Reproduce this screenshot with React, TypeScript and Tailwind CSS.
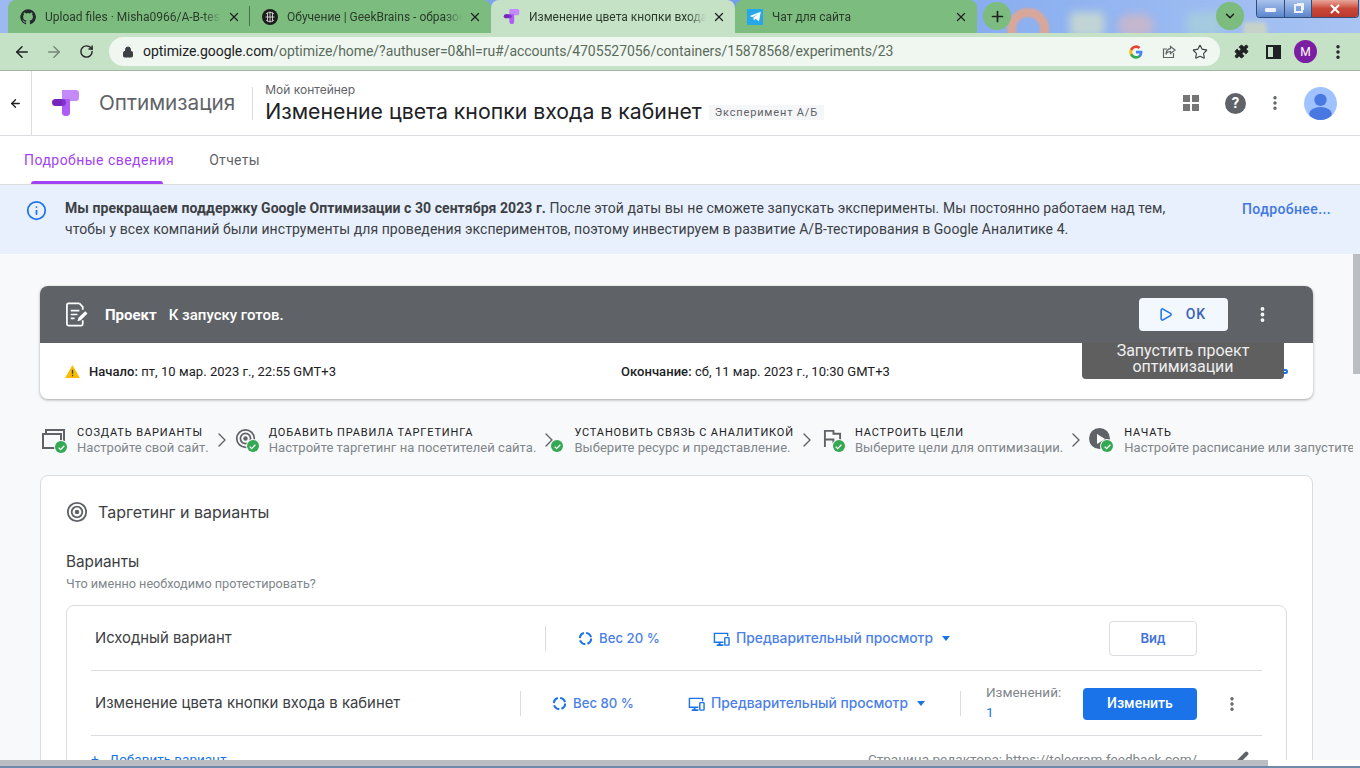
import React from "react";
import { ArrowLeft, ArrowRight, RotateCw, Lock, Star, X, Plus, ChevronDown, ChevronRight, MoreVertical, Puzzle, Info, Play, Pencil } from "lucide-react";

const roboto = "font-['Roboto',sans-serif]";
const display = "font-['Inter',sans-serif]";

function Check({ className }: { className: string }) {
  return (
    <span className={`absolute flex h-[12px] w-[12px] items-center justify-center rounded-full bg-[#34a853] ring-1 ring-[#f8f9fa] ${className}`}>
      <svg viewBox="0 0 12 12" className="h-[9px] w-[9px]" fill="none" stroke="#fff" strokeWidth="1.7">
        <path d="M2.2 6.2 4.8 8.8 9.8 3.6" />
      </svg>
    </span>
  );
}

function Tab({ icon, title, active, w, sep }: { icon: React.ReactNode; title: string; active?: boolean; w: string; sep?: boolean }) {
  return (
    <div className={`relative flex h-[33px] shrink-0 items-center pl-[12px] pr-[9px] ${w} ${active ? "bg-[#c6e2c6] rounded-t-lg" : ""}`}>
      {icon}
      <span className="ml-[9px] min-w-0 flex-1 overflow-hidden whitespace-nowrap text-[12px] text-[#2b3b2c] [mask-image:linear-gradient(to_right,black_90%,transparent)]">{title}</span>
      <X className="ml-[6px] h-[14px] w-[14px] shrink-0 text-[#202124]" strokeWidth={2.2} />
      {sep && <span className="absolute right-0 top-[6px] h-[20px] w-px bg-[#4d6f4e]" />}
    </div>
  );
}

function OptimizeLogo({ className }: { className: string }) {
  return (
    <svg viewBox="0 0 27 26" className={className}>
      <path d="M10 0h14a3 3 0 0 1 3 3v5a3 3 0 0 1-3 3h-14z" fill="#c58af9" />
      <path d="M10 5a5 5 0 0 1 5-5h3v22a4 4 0 0 1-8 0z" fill="#c58af9" />
      <path d="M10 9h8v13a4 4 0 0 1-8 0z" fill="#af5cf7" />
      <circle cx="3.500" cy="12.500" r="3.500" fill="#7627bb" />
      <path d="M3.500 9h7v7h-7z" fill="#7627bb" />
      <path d="M10 9h.5a3.500 3.500 0 0 1 0 7H10z" fill="#8430ce" />
    </svg>
  );
}

function TargetIcon({ className, color = "#5f6368" }: { className: string; color?: string }) {
  return (
    <svg viewBox="0 0 24 24" className={className} fill="none" stroke={color}>
      <circle cx="12" cy="12" r="10" strokeWidth="2" />
      <circle cx="12" cy="12" r="5.800" strokeWidth="2" />
      <circle cx="12" cy="12" r="2.500" fill={color} stroke="none" />
    </svg>
  );
}

function Step({ icon, title, sub, iconW, last }: { icon: React.ReactNode; title: string; sub: string; iconW: string; last?: boolean }) {
  return (
    <div className="flex shrink-0 items-center">
      <div className={`relative h-[26px] shrink-0 ${iconW}`}>{icon}</div>
      <div className={`${roboto} whitespace-nowrap`}>
        <div className="text-[11px] leading-[15px] tracking-[0.85px] text-[#202124]">{title}</div>
        <div className="text-[13px] leading-[16px] tracking-[0.04px] text-[#80868b]">{sub}</div>
      </div>
      {!last && <ChevronRight className="mx-[1px] h-[24px] w-[24px] shrink-0 text-[#5f6368]" strokeWidth={1.4} />}
    </div>
  );
}

function WeightIcon() {
  return (
    <svg viewBox="0 0 16 16" className="h-[15px] w-[15px]" fill="none" stroke="#1a73e8" strokeWidth="2.200">
      <circle cx="8" cy="8" r="6" strokeDasharray="7 2.420" />
    </svg>
  );
}

function DevicesIcon() {
  return (
    <svg viewBox="0 0 18 16" className="h-[16px] w-[17px]" fill="none" stroke="#1a73e8" strokeWidth="1.500">
      <path d="M11 11.500H1.500V2h14v3" />
      <path d="M4 14.500h7M7 11.500v3" strokeWidth="2" />
      <rect x="12.500" y="6.500" width="4.500" height="8" rx=".8" />
    </svg>
  );
}

function Preview() {
  return (
    <div className="flex items-center">
      <DevicesIcon />
      <span className={`${display} ml-[6px] whitespace-nowrap text-[13.8px] font-medium text-[#4b7fe8]`}>Предварительный просмотр</span>
      <span className="ml-[9px] h-0 w-0 border-x-[4.500px] border-t-[5px] border-x-transparent border-t-[#1a73e8]" />
    </div>
  );
}

export default function App(): React.ReactElement {
  return (
    <div className={`${roboto} flex h-[768px] w-[1360px] flex-col overflow-hidden bg-white`}>
      {/* browser tab strip */}
      <div className="relative flex h-[33px] shrink-0 overflow-hidden bg-gradient-to-r from-[#9db9f2] via-[#6f9bec] to-[#a9c4f3]">
        <div className="absolute left-[1007px] top-[8px] h-[42px] w-[42px] rounded-full border-[9px] border-[#d9a79a] blur-[1px]" />
        <div className="absolute left-[1070px] top-[12px] h-[24px] w-[34px] rounded-sm bg-[#d8e4c8] opacity-70 blur-[4px]" />
        <div className="absolute left-[1118px] top-[14px] h-[24px] w-[36px] rounded-full bg-[#d8b7c0] opacity-70 blur-[4px]" />
        <div className="absolute left-[1186px] top-[12px] h-[24px] w-[36px] rounded-lg bg-[#a8d2d8] opacity-70 blur-[4px]" />
        <div className="absolute left-[1243px] top-[22px] h-[14px] w-[24px] rounded-sm bg-[#d8dcb8] opacity-70 blur-[2px]" />
        <div className="relative ml-[8px] flex h-[33px] w-[483px] shrink-0 rounded-t-lg bg-[#7cbc7e]">
          <Tab
            w="w-[242px]"
            sep
            title="Upload files · Misha0966/A-B-test"
            icon={
              <svg viewBox="0 0 24 24" className="h-[16px] w-[16px] shrink-0" fill="#24292f">
                <path d="M12 .5a11.500 11.500 0 0 0-3.640 22.410c.58.110.790-.250.790-.550v-2.030c-3.200.700-3.880-1.360-3.880-1.360-.520-1.330-1.280-1.690-1.280-1.690-1.040-.710.080-.700.080-.700 1.160.080 1.770 1.190 1.770 1.190 1.030 1.760 2.700 1.250 3.350.960.100-.750.400-1.250.730-1.540-2.550-.290-5.240-1.280-5.240-5.680 0-1.250.450-2.280 1.180-3.080-.120-.290-.510-1.460.110-3.040 0 0 .970-.310 3.170 1.180a11 11 0 0 1 5.770 0c2.200-1.490 3.170-1.180 3.170-1.180.620 1.580.230 2.750.110 3.040.740.800 1.180 1.830 1.180 3.080 0 4.410-2.690 5.380-5.250 5.670.410.360.780 1.050.780 2.120v3.140c0 .310.210.670.800.550A11.500 11.500 0 0 0 12 .5z" />
              </svg>
            }
          />
          <Tab
            w="w-[241px]"
            title="Обучение | GeekBrains - образовательный портал"
            icon={
              <svg viewBox="0 0 16 16" className="h-[16px] w-[16px] shrink-0">
                <circle cx="8" cy="8" r="8" fill="#1d1d1f" />
                <path d="M4 5c2-2 6-2 8 0M3.500 8h9M4 11c2 2 6 2 8 0M8 2.500v11M5.500 3.500v9M10.500 3.500v9" stroke="#e8e8e8" strokeWidth=".8" fill="none" />
              </svg>
            }
          />
        </div>
        <div className="relative w-[244px] shrink-0">
          <Tab w="w-[244px]" active title="Изменение цвета кнопки входа в кабинет" icon={<OptimizeLogo className="h-[15px] w-[17px] shrink-0" />} />
        </div>
        <div className="relative w-[242px] shrink-0">
          <div className="h-[33px] rounded-t-lg bg-[#7cbc7e]">
            <Tab
              w="w-[242px]"
              title="Чат для сайта"
              icon={
                <span className="flex h-[16px] w-[16px] shrink-0 items-center justify-center bg-[#27a7e7]">
                  <svg viewBox="0 0 16 16" className="h-[13px] w-[13px]" fill="#fff">
                    <path d="M1 7.500 14.500 2 12.300 14 8 10.800l-2 2-.6-3.600L11.500 4.700 4 8.800z" />
                  </svg>
                </span>
              }
            />
          </div>
        </div>
        <div className="relative ml-[6px] mt-[2px] flex h-[28px] w-[28px] items-center justify-center rounded-full bg-[#7cbc7e]">
          <Plus className="h-[17px] w-[17px] text-[#202124]" strokeWidth={2.4} />
        </div>
        <div className="relative ml-[205px] mt-[2px] flex h-[28px] w-[28px] items-center justify-center rounded-full bg-[#7cbc7e]">
          <ChevronDown className="h-[14px] w-[14px] text-[#202124]" strokeWidth={2.6} />
        </div>
        {/* window buttons */}
        <div className="absolute right-[1px] top-0 flex h-[18px] w-[103px] overflow-hidden rounded-b-[4px] border border-t-0 border-[#2f4f7a]">
          <div className="flex w-[28px] items-center justify-center border-r border-[#2f4f7a] bg-gradient-to-b from-[#a9c3ec] to-[#5b86cc]">
            <span className="mt-[2px] h-[4px] w-[11px] rounded-[1px] bg-[#eef2f8]" />
          </div>
          <div className="flex w-[27px] items-center justify-center border-r border-[#2f4f7a] bg-gradient-to-b from-[#a9c3ec] to-[#5b86cc]">
            <span className="relative h-[9px] w-[9px] border-2 border-[#eef2f8] shadow-[2px_-2px_0_-1px_#eef2f8]" />
          </div>
          <div className="flex flex-1 items-center justify-center bg-gradient-to-b from-[#e8a79c] via-[#c9483a] to-[#b9392c]">
            <X className="h-[14px] w-[14px] text-white" strokeWidth={3.4} />
          </div>
        </div>
      </div>

      {/* browser toolbar */}
      <div className="flex h-[37px] shrink-0 items-center bg-[#c6e2c6]">
        <ArrowLeft className="ml-[13px] h-[18px] w-[18px] text-[#202124]" strokeWidth={2} />
        <ArrowRight className="ml-[14px] h-[18px] w-[18px] text-[#75877a]" strokeWidth={2} />
        <RotateCw className="ml-[16px] h-[15px] w-[15px] text-[#202124]" strokeWidth={2.2} />
        <div className="ml-[15px] flex h-[29px] w-[1111px] items-center rounded-full bg-[#f0f7f0] pl-[13px] pr-[12px]">
          <Lock className="h-[12px] w-[12px] text-[#3c4043]" fill="#3c4043" strokeWidth={2} />
          <span className="ml-[9px] whitespace-nowrap text-[14px] tracking-[-0.05px] text-[#5a6b5c]">
            <span className="text-[#202124]">optimize.google.com</span>/optimize/home/?authuser=0&amp;hl=ru#/accounts/4705527056/containers/15878568/experiments/23
          </span>
          <div className="ml-auto flex items-center">
            <svg viewBox="0 0 24 24" className="h-[14px] w-[14px]">
              <path d="M23 12.300c0-.800-.100-1.600-.200-2.300H12v4.400h6.200a5.300 5.300 0 0 1-2.300 3.400v2.900h3.700c2.200-2 3.400-5 3.400-8.400z" fill="#4285f4" />
              <path d="M12 23.500c3.100 0 5.700-1 7.600-2.800l-3.700-2.900c-1 .700-2.300 1.100-3.900 1.100-3 0-5.500-2-6.400-4.700H1.800v3A11.500 11.500 0 0 0 12 23.500z" fill="#34a853" />
              <path d="M5.600 14.200a7 7 0 0 1 0-4.400v-3H1.800a11.500 11.500 0 0 0 0 10.400z" fill="#fbbc05" />
              <path d="M12 5c1.700 0 3.200.6 4.400 1.700l3.300-3.300A11.500 11.500 0 0 0 1.800 6.800l3.800 3C6.500 7 9 5 12 5z" fill="#ea4335" />
            </svg>
            <svg viewBox="0 0 16 16" className="ml-[18px] h-[16px] w-[16px]" fill="none" stroke="#5f6368" strokeWidth="1.200">
              <path d="M12.500 9v4.500h-10V5H6" />
              <path d="M9.500 2.500 14 6l-4.500 3.500V7.500C7 7.500 5.500 8.500 5 10.500c0-3.500 1.800-5.500 4.500-5.800z" />
            </svg>
            <Star className="ml-[15px] h-[16px] w-[16px] text-[#3c4043]" strokeWidth={1.7} />
          </div>
        </div>
        <Puzzle className="ml-[14px] h-[15px] w-[15px] text-[#202124]" fill="#202124" strokeWidth={1.5} />
        <span className="ml-[17px] flex h-[14px] w-[15px] justify-end border-2 border-[#202124]">
          <span className="h-full w-[6px] bg-[#202124]" />
        </span>
        <span className="ml-[13px] flex h-[23px] w-[23px] items-center justify-center rounded-full bg-[#7b1fa2] text-[12px] text-white">M</span>
        <MoreVertical className="ml-[12px] h-[18px] w-[18px] text-[#202124]" strokeWidth={2.6} />
      </div>

      {/* app */}
      <div className="relative flex min-h-0 flex-1 flex-col border-t border-[#9fb7a0] bg-[#f8f9fa]">
        <header className="flex h-[65px] shrink-0 items-center border-b border-[#dadce0] bg-white">
          <div className="flex h-full w-[32px] shrink-0 items-center justify-center border-r border-[#dadce0]">
            <ArrowLeft className="h-[13px] w-[13px] text-[#202124]" strokeWidth={2.4} />
          </div>
          <OptimizeLogo className="ml-[20px] h-[26px] w-[27px] shrink-0" />
          <span className={`${display} ml-[20px] text-[20.700px] text-[#5f6368]`}>Оптимизация</span>
          <div className="ml-[17px] h-[33px] w-px bg-[#dadce0]" />
          <div className="ml-[12px] pt-[3px]">
            <div className={`${display} text-[12px] leading-[14px] text-[#5f6368]`}>Мой контейнер</div>
            <div className="flex items-center">
              <span className={`${display} text-[21.250px] leading-[29px] text-[#202124]`}>Изменение цвета кнопки входа в кабинет</span>
              <span className="ml-[7px] mt-[2px] bg-[#f5f6f7] px-[6px] text-[11px] leading-[15px] tracking-[0.83px] text-[#5f6368]">Эксперимент А/Б</span>
            </div>
          </div>
          <div className="ml-auto flex items-center">
            <div className="grid h-[16px] w-[16px] grid-cols-2 gap-[2px]">
              <span className="bg-[#757575]" />
              <span className="bg-[#757575]" />
              <span className="bg-[#757575]" />
              <span className="bg-[#757575]" />
            </div>
            <span className="ml-[26px] flex h-[21px] w-[21px] items-center justify-center rounded-full bg-[#5f6368] text-[15px] font-bold text-white">?</span>
            <MoreVertical className="ml-[20px] h-[18px] w-[18px] text-[#5f6368]" strokeWidth={2.6} />
            <svg viewBox="0 0 32 32" className="ml-[20px] mr-[23px] h-[33px] w-[33px]">
              <defs>
                <clipPath id="avatar">
                  <circle cx="16" cy="16" r="16" />
                </clipPath>
              </defs>
              <circle cx="16" cy="16" r="16" fill="#a0c3ff" />
              <g clipPath="url(#avatar)" fill="#4979e0">
                <circle cx="16" cy="12.500" r="6" />
                <ellipse cx="16" cy="26" rx="11" ry="6.500" />
              </g>
            </svg>
          </div>
        </header>

        {/* tabs */}
        <div className="flex h-[48px] shrink-0 bg-white">
          <div className="relative ml-[24px] flex items-center text-[14px] tracking-[0.47px] text-[#a142f4]">
            Подробные сведения
            <span className="absolute bottom-0 left-[7px] right-[11px] h-[3px] rounded-t-[3px] bg-[#a142f4]" />
          </div>
          <div className="ml-[35px] flex items-center text-[14px] tracking-[0.3px] text-[#5f6368]">Отчеты</div>
        </div>

        {/* notice */}
        <div className="flex h-[70px] shrink-0 items-start border-t border-[#dadce0] bg-[#e8f0fe] pl-[26px] pt-[13px]">
          <Info className="mt-[2px] h-[21px] w-[21px] shrink-0 text-[#1a73e8]" strokeWidth={2} />
          <p className="ml-[18px] w-[1125px] text-[14px] leading-[21px] tracking-[0.06px] text-[#3c4043]">
            <b className="font-bold">Мы прекращаем поддержку Google Оптимизации с 30 сентября 2023 г.</b> После этой даты вы не сможете запускать эксперименты. Мы постоянно работаем над тем, чтобы у всех компаний были инструменты для проведения экспериментов, поэтому инвестируем в развитие А/B-тестирования в Google Аналитике 4.
          </p>
          <span className="ml-[52px] mt-[1px] whitespace-nowrap text-[14px] font-medium leading-[20px] tracking-[0.4px] text-[#3f78e0]">Подробнее...</span>
        </div>

        {/* scrolling page */}
        <div className="relative min-h-0 flex-1 overflow-hidden pl-[40px] pt-[32px]">
          <div className="relative w-[1273px] rounded-lg bg-white shadow-[0_1px_3px_rgba(60,64,67,0.45)]">
            <div className="flex h-[57px] items-center rounded-t-lg bg-[#5f6368] pl-[25px] text-white">
              <svg viewBox="0 0 24 26" className="h-[25px] w-[23px]" fill="none" stroke="#fff" strokeWidth="1.800">
                <path d="M15 1.500H3.500a1.500 1.500 0 0 0-1.500 1.500v20a1.500 1.500 0 0 0 1.500 1.500H17a1.500 1.500 0 0 0 1.500-1.500V19" />
                <path d="M15 1.500 18.500 5v3" />
                <path d="M6 9h9M6 13h7M6 17h4" />
                <path d="M13 20l1-3.500 7-7 2.500 2.500-7 7z" fill="#fff" stroke="none" />
              </svg>
              <span className="ml-[17px] pt-[1px] text-[15px] font-bold">Проект</span>
              <span className="ml-[12px] pt-[1px] text-[15px] font-medium">К запуску готов.</span>
              <div className="ml-[855px] flex h-[33px] w-[89px] items-center justify-center rounded-[4px] bg-[#f3f7fe] pr-[3px] text-[14px] font-medium tracking-[0.8px] text-[#3b63b5]">
                <Play className="h-[15px] w-[15px] text-[#1a73e8]" strokeWidth={2.4} />
                <span className="ml-[13px]">OK</span>
              </div>
              <MoreVertical className="ml-[25px] h-[19px] w-[19px] text-white" strokeWidth={2.8} />
            </div>
            <div className="relative flex h-[56px] items-center pt-[1px] text-[13px] tracking-[0.05px] text-[#202124]">
              <svg viewBox="0 0 16 14" className="ml-[25px] h-[13px] w-[15px]" fill="#fbbc04">
                <path d="M8 0 16 14H0z" />
                <path d="M7.300 5h1.400v4.500H7.300zM7.300 10.500h1.400V12H7.300z" fill="#3c4043" />
              </svg>
              <span className="ml-[9px]"><span className="font-medium">Начало:</span> пт, 10 мар. 2023 г., 22:55 GMT+3</span>
              <span className="absolute left-[581px]"><span className="font-medium">Окончание:</span> сб, 11 мар. 2023 г., 10:30 GMT+3</span>
              <span className="absolute left-[1240px] top-[26px] h-[5px] w-[8px] rounded-full border-2 border-[#1a73e8]" />
            </div>
            {/* tooltip */}
            <div className="absolute left-[1042px] top-[57px] h-[36px] w-[202px] rounded-b-[4px] bg-[#5f5f5f] text-center text-[16px] leading-[16px] text-[#eeeeee]">
              Запустить проект
              <br />
              оптимизации
            </div>
          </div>

          {/* steps */}
          <div className="mt-[24px] flex h-[34px] w-[1313px] items-center overflow-hidden">
            <Step
              iconW="w-[37px]"
              title="СОЗДАТЬ ВАРИАНТЫ"
              sub="Настройте свой сайт."
              icon={
                <>
                  <span className="absolute left-[5px] top-[2px] h-[16px] w-[20px] border-2 border-[#5f6368]" />
                  <span className="absolute left-[2px] top-[6px] h-[16px] w-[20px] border-2 border-[#5f6368] bg-[#f8f9fa]" />
                  <Check className="left-[15px] top-[14px]" />
                </>
              }
            />
            <Step
              iconW="w-[34px]"
              title="ДОБАВИТЬ ПРАВИЛА ТАРГЕТИНГА"
              sub="Настройте таргетинг на посетителей сайта."
              icon={
                <>
                  <TargetIcon className="absolute left-0 top-[1px] h-[21px] w-[21px]" />
                  <Check className="left-[12px] top-[13px]" />
                </>
              }
            />
            <Step
              iconW="w-[12px]"
              title="УСТАНОВИТЬ СВЯЗЬ С АНАЛИТИКОЙ"
              sub="Выберите ресурс и представление."
              icon={<Check className="left-[-11px] top-[13px]" />}
            />
            <Step
              iconW="w-[35px]"
              title="НАСТРОИТЬ ЦЕЛИ"
              sub="Выберите цели для оптимизации."
              icon={
                <>
                  <svg viewBox="0 0 20 20" className="absolute left-[3px] top-[2px] h-[19px] w-[19px]" fill="none" stroke="#5f6368" strokeWidth="2">
                    <path d="M2 19V2h9v3h7v9h-7v-3H2" />
                  </svg>
                  <Check className="left-[13px] top-[13px]" />
                </>
              }
            />
            <Step
              iconW="w-[35px]"
              last
              title="НАЧАТЬ"
              sub="Настройте расписание или запустите эксперимент."
              icon={
                <>
                  <span className="absolute left-0 top-[1px] flex h-[21px] w-[21px] items-center justify-center rounded-full bg-[#5f6368]">
                    <span className="ml-[2px] h-0 w-0 border-y-[5px] border-l-[8px] border-y-transparent border-l-white" />
                  </span>
                  <Check className="left-[12px] top-[13px]" />
                </>
              }
            />
          </div>

          {/* targeting card */}
          <div className="mt-[18px] h-[400px] w-[1273px] rounded-t-lg border border-[#dadce0] bg-white pl-[25px] pr-[25px] pt-[24px]">
            <div className="flex items-center">
              <TargetIcon className="h-[22px] w-[22px]" />
              <span className={`${display} ml-[10px] text-[16px] text-[#3c4043]`}>Таргетинг и варианты</span>
            </div>
            <div className={`${display} mt-[29px] text-[15.300px] leading-[18px] text-[#3c4043]`}>Варианты</div>
            <div className="mt-[6px] text-[12.650px] leading-[14px] text-[#80868b]">Что именно необходимо протестировать?</div>
            <div className="mt-[14px] rounded-lg border border-[#dadce0] px-[24px]">
              {/* original row */}
              <div className="flex h-[65px] items-center border-b border-[#dadce0] pt-[1px]">
                <span className={`${display} ml-[4px] w-[450px] text-[14.850px] text-[#3c4043]`}>Исходный вариант</span>
                <span className="h-[25px] w-px bg-[#dadce0]" />
                <div className="ml-[32px] flex w-[135px] items-center">
                  <WeightIcon />
                  <span className={`${display} ml-[6px] whitespace-nowrap text-[13.200px] font-medium text-[#4b7fe8]`}>Вес 20 %</span>
                </div>
                <Preview />
                <div className={`${display} ml-[159px] flex h-[35px] w-[88px] items-center justify-center rounded-[4px] border border-[#dadce0] text-[13px] font-semibold text-[#3f72db]`}>Вид</div>
              </div>
              {/* variant row */}
              <div className="flex h-[65px] items-center border-b border-[#dadce0] pt-[1px]">
                <span className={`${display} ml-[4px] w-[425px] text-[14.870px] text-[#3c4043]`}>Изменение цвета кнопки входа в кабинет</span>
                <span className="h-[25px] w-px bg-[#dadce0]" />
                <div className="ml-[31px] flex w-[136px] items-center">
                  <WeightIcon />
                  <span className={`${display} ml-[6px] whitespace-nowrap text-[13.200px] font-medium text-[#4b7fe8]`}>Вес 80 %</span>
                </div>
                <Preview />
                <span className="ml-[35px] h-[25px] w-px bg-[#dadce0]" />
                <div className="ml-[25px] -mt-[3px] w-[97px] text-[13.500px] leading-[20px] text-[#80868b]">
                  <div>Изменений:</div>
                  <div className="text-[#1a73e8]">1</div>
                </div>
                <div className="flex h-[32px] w-[114px] items-center justify-center rounded-[4px] bg-[#1a73e8] text-[14px] font-medium text-white">Изменить</div>
                <MoreVertical className="ml-[26px] h-[18px] w-[18px] text-[#5f6368]" strokeWidth={2.6} />
              </div>
              {/* add variant row */}
              <div className="relative flex h-[60px] pt-[13px] text-[13.500px]">
                <span className="w-[18px] text-[#1a73e8]">+</span>
                <span className="text-[#1a73e8]">Добавить вариант</span>
                <span className="absolute left-[777px] top-[13px] whitespace-nowrap text-[#80868b]">Страница редактора: https://telegram-feedback.com/</span>
                <Pencil className="absolute left-[1145px] top-[15px] h-[13px] w-[13px] text-[#5f6368]" fill="#5f6368" />
              </div>
            </div>
          </div>

          {/* scrollbars */}
          <div className="absolute right-0 top-0 h-[120px] w-[7px] bg-[#babdc1]" />
          <div className="absolute bottom-[2px] left-0 h-[6px] w-full bg-white">
            <div className="h-full w-[1268px] bg-[#babdc1]" />
          </div>
          <div className="absolute bottom-0 left-0 h-[2px] w-full bg-[#6f8aa8]" />
        </div>
      </div>
    </div>
  );
}
